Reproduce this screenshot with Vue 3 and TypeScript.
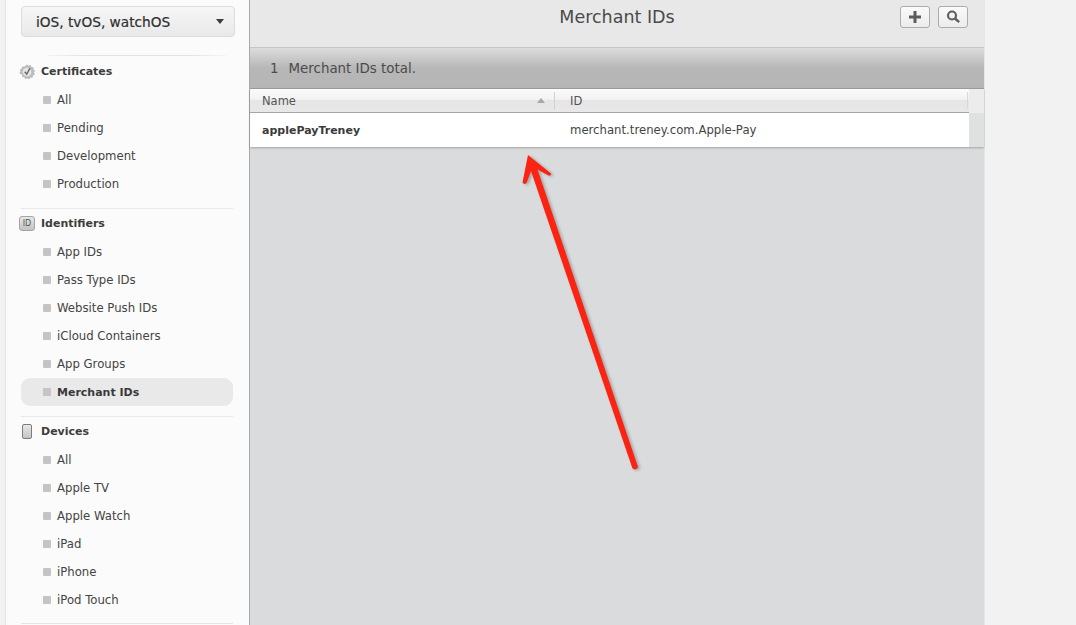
<script setup lang="ts">
interface NavSection {
  title: string
  icon: 'cert' | 'id' | 'device'
  items: string[]
}

const sections: NavSection[] = [
  { title: 'Certificates', icon: 'cert', items: ['All', 'Pending', 'Development', 'Production'] },
  {
    title: 'Identifiers',
    icon: 'id',
    items: ['App IDs', 'Pass Type IDs', 'Website Push IDs', 'iCloud Containers', 'App Groups', 'Merchant IDs']
  },
  { title: 'Devices', icon: 'device', items: ['All', 'Apple TV', 'Apple Watch', 'iPad', 'iPhone', 'iPod Touch'] }
]

const activeItem = 'Merchant IDs'
</script>

<template>
  <div class="page">
    <aside class="sidebar">
      <div class="platform">
        <span>iOS, tvOS, watchOS</span>
        <i class="caret"></i>
      </div>
      <div class="fade-rule"></div>

      <section v-for="(section, i) in sections" :key="section.title" class="nav-section" :class="{ first: i === 0 }">
        <div class="nav-head">
          <span class="nav-icon">
            <svg v-if="section.icon === 'cert'" width="16" height="16" viewBox="0 0 16 16">
              <path
                d="M8 .8l1.5 1.3 1.9-.6.8 1.8 2 .3-.1 2 1.6 1.2-1 1.7.7 1.9-1.8.9-.3 2-2 0-1.2 1.6-1.8-.9-1.9.7-.9-1.8-2-.4.1-2L.8 9.300l1-1.700-.6-1.900 1.800-.8.400-2 2 .1z"
                fill="#bdbebf"
                stroke="#a5a5a5"
                stroke-width=".5"
              />
              <circle cx="8" cy="8" r="4.300" fill="#e6e6e6" />
              <path d="M5.700 7.800l2 2.400 3.300-6" fill="none" stroke="#6a6a6a" stroke-width="1.400" />
            </svg>
            <span v-else-if="section.icon === 'id'" class="id-badge">ID</span>
            <span v-else class="device-icon"></span>
          </span>
          <span>{{ section.title }}</span>
        </div>
        <ul class="nav-list">
          <li v-for="item in section.items" :key="item" class="nav-item" :class="{ active: item === activeItem }">
            <i class="bullet"></i>
            <span>{{ item }}</span>
          </li>
        </ul>
      </section>
      <div class="last-rule"></div>
    </aside>

    <main class="content">
      <header class="title-bar">
        <h1>Merchant IDs</h1>
        <div class="tools">
          <button class="tool" type="button" aria-label="Add">
            <svg width="14" height="14" viewBox="0 0 14 14"><path d="M7 1v12M1 7h12" stroke="#5c5c5c" stroke-width="3" /></svg>
          </button>
          <button class="tool" type="button" aria-label="Search">
            <svg width="16" height="16" viewBox="0 0 16 16">
              <circle cx="7" cy="6.500" r="4" fill="none" stroke="#5f5f5f" stroke-width="2.200" />
              <path d="M10 9.500l4.200 3.700" stroke="#5f5f5f" stroke-width="2.400" />
            </svg>
          </button>
        </div>
      </header>

      <div class="total-band"><b>1</b>Merchant IDs total.</div>

      <div class="table">
        <div class="table-main">
          <div class="table-head">
            <div class="col-name">Name<i class="sort"></i></div>
            <div class="col-id">ID</div>
          </div>
          <div class="table-row">
            <div class="col-name strong">applePayTreney</div>
            <div class="col-id">merchant.treney.com.Apple-Pay</div>
          </div>
        </div>
        <div class="table-gutter">
          <div class="gutter-head"></div>
          <div class="gutter-body"></div>
        </div>
      </div>
    </main>

    <div class="right-space"></div>

    <svg class="arrow" width="1076" height="625" viewBox="0 0 1076 625" aria-hidden="true">
      <path
        d="M528 155L551 173.500Q551.500 176 548.500 175.500L537.500 169.500L638 467Q636.500 471 632.500 468.500L531 171L526.500 183Q524 185 522.500 182.500Z"
        fill="#fb2412"
      />
    </svg>
  </div>
</template>

<style scoped>
.page {
  position: relative;
  display: flex;
  height: 625px;
  overflow: hidden;
  padding-left: 5px;
  box-sizing: border-box;
  background: #f2f2f3;
  font-family: "DejaVu Sans", "Liberation Sans", sans-serif;
  color: #3c3c3c;
  font-size: 12px;
}

.sidebar {
  width: 245px;
  flex: none;
  box-sizing: border-box;
  padding: 6px 16px 0 15px;
  background: #fbfbfb;
  border-left: 1px solid #e4e4e4;
  border-right: 1px solid #a9a9a9;
}

.platform {
  display: flex;
  align-items: center;
  justify-content: space-between;
  width: 214px;
  height: 31px;
  box-sizing: border-box;
  padding: 0 10px 0 14px;
  border: 1px solid #dcdcdc;
  border-radius: 4px;
  background: linear-gradient(#f6f6f6, #e9e9e9);
  font-size: 13.700px;
  font-weight: 400;
  color: #2f2f2f;
  -webkit-text-stroke: 0.2px #2f2f2f;
}

.caret {
  width: 0;
  height: 0;
  border-left: 4.500px solid transparent;
  border-right: 4.500px solid transparent;
  border-top: 5px solid #3d3d3d;
}

.fade-rule {
  height: 1px;
  margin: 18px 6px 0 27px;
  background: linear-gradient(90deg, #f3f3f3, #e3e3e3 20%, #e3e3e3 80%, #f6f6f6);
}

.nav-section {
  width: 212px;
  box-sizing: border-box;
  margin-top: -1px;
  padding-bottom: 11px;
  border-top: 1px solid #e8e8e8;
}

.nav-section.first {
  margin-top: 0;
  border-top: 0;
  padding-top: 1px;
}

.nav-head {
  display: flex;
  align-items: center;
  height: 29px;
  font-weight: 700;
  font-size: 11px;
  color: #3d3d3d;
}

.nav-icon {
  display: flex;
  align-items: center;
  justify-content: center;
  width: 16px;
  margin-right: 6px;
  margin-left: -2px;
}

.id-badge {
  display: block;
  width: 16px;
  height: 15px;
  box-sizing: border-box;
  border: 1px solid #a5a5a5;
  border-radius: 3px;
  background: linear-gradient(#e8e8e8, #c2c2c2);
  font-size: 8px;
  font-weight: 400;
  line-height: 13px;
  text-align: center;
  color: #555;
}

.device-icon {
  display: block;
  width: 10px;
  height: 15px;
  box-sizing: border-box;
  border: 1px solid #7d7d7d;
  border-radius: 2px;
  background: linear-gradient(#e8e8e8, #c4c4c4);
}

.nav-list {
  list-style: none;
  margin: 0;
  padding: 0;
}

.nav-item {
  display: flex;
  align-items: center;
  height: 28px;
  padding-left: 22px;
  border-radius: 9px;
  font-size: 11.700px;
  color: #444;
}

.nav-item.active {
  background: #e9e9e9;
  font-weight: 700;
  font-size: 11px;
  color: #3a3a3a;
}

.bullet {
  width: 8px;
  height: 8px;
  flex: none;
  margin-right: 6px;
  border-radius: 1px;
  background: #c4c4c4;
}

.last-rule {
  height: 1px;
  width: 212px;
  margin-top: -2px;
  background: #e4e4e4;
}

.content {
  width: 735px;
  flex: none;
  display: flex;
  flex-direction: column;
  box-sizing: border-box;
  border-right: 1px solid #e6e6e6;
  background: #d9dbdc;
}

.title-bar {
  position: relative;
  height: 47px;
  flex: none;
  background: #e8e8e8;
}

.title-bar h1 {
  margin: 0;
  padding-top: 6px;
  text-align: center;
  font-size: 17.500px;
  font-weight: 400;
  line-height: 22px;
  color: #4a4a4a;
}

.tools {
  position: absolute;
  top: 6px;
  right: 16px;
  display: flex;
  gap: 8px;
}

.tool {
  display: flex;
  align-items: center;
  justify-content: center;
  width: 30px;
  height: 22px;
  padding: 0;
  border: 1px solid #acacac;
  border-radius: 3px;
  background: linear-gradient(#fafafa, #ececec);
}

.total-band {
  height: 42px;
  flex: none;
  box-sizing: border-box;
  padding: 13px 0 0 20px;
  border-top: 1px solid #c6c6c6;
  border-bottom: 1px solid #9c9c9c;
  background: linear-gradient(#dcdcdc, #b7b7b7 50%, #b5b5b5);
  font-size: 13.400px;
  line-height: 16px;
  color: #4b4b4b;
}

.total-band b {
  font-weight: 400;
  margin-right: 10px;
}

.table {
  display: flex;
  flex: none;
  box-shadow: 0 1px 2px rgba(0, 0, 0, 0.25);
}

.table-main {
  width: 719px;
  flex: none;
}

.table-head {
  display: flex;
  height: 24px;
  box-sizing: border-box;
  border-bottom: 1px solid #a5a5a5;
  background: linear-gradient(#fbfbfb, #f3f3f3 45%, #e6e6e6 50%, #e8e8e8);
  font-size: 11.500px;
  font-weight: 400;
  color: #555;
}

.table-head .col-name {
  position: relative;
  margin: 3px 0;
  line-height: 19px;
  border-right: 1px solid #d0d0d0;
}

.table-head .col-id {
  flex: 1;
  margin: 3px 1px 3px 0;
  line-height: 19px;
  border-right: 1px solid #d8d8d8;
}

.sort {
  position: absolute;
  top: 6px;
  right: 9px;
  border-left: 4px solid transparent;
  border-right: 4px solid transparent;
  border-bottom: 5px solid #a8a8a8;
}

.col-name {
  width: 305px;
  flex: none;
  box-sizing: border-box;
  padding-left: 12px;
}

.col-id {
  padding-left: 15px;
}

.table-row {
  display: flex;
  height: 34px;
  align-items: center;
  background: #fff;
  font-size: 11.700px;
  color: #444;
}

.strong {
  font-weight: 700;
  font-size: 11px;
  color: #3a3a3a;
}

.table-gutter {
  flex: 1;
  display: flex;
  flex-direction: column;
}

.gutter-head {
  height: 24px;
  background: #ececec;
}

.gutter-body {
  flex: 1;
  background: #dfe0e0;
}

.right-space {
  flex: 1;
  background: #f2f2f3;
}

.arrow {
  position: absolute;
  top: 0;
  left: 0;
  pointer-events: none;
  filter: drop-shadow(2px 1px 1.500px rgba(80, 80, 80, 0.4));
}
</style>

<style>
body {
  overflow: hidden;
}
</style>
